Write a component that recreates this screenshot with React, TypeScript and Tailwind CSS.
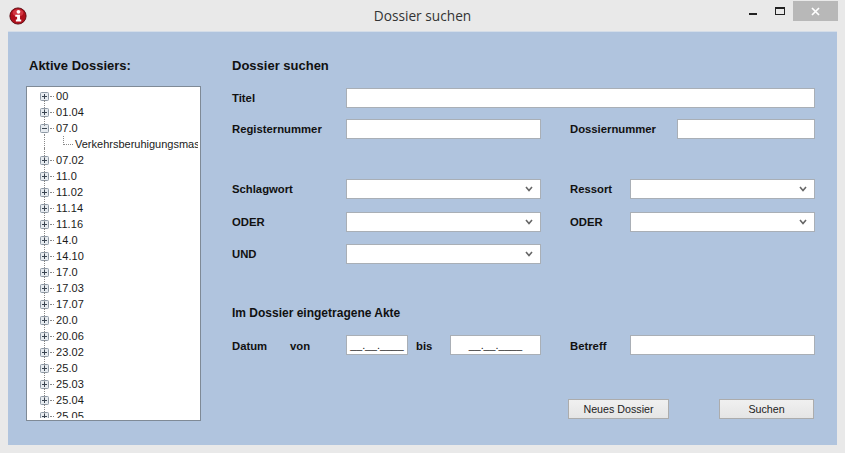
const font = "[font-family:'Liberation_Sans',Arial,sans-serif]";

function Expander({ open }: { open?: boolean }) {
  return (
    <svg width="9" height="9" viewBox="0 0 9 9" className="shrink-0">
      <rect x="0.5" y="0.5" width="8" height="8" rx="1" fill="#e6ebf0" stroke="#8f9aa6" />
      <path d="M2 4.5H7" stroke="#3a4450" />
      {!open && <path d="M4.5 2V7" stroke="#3a4450" />}
    </svg>
  );
}

function TreeRow({ label, open, line = true }: { label: string; open?: boolean; line?: boolean }) {
  return (
    <div className="relative flex h-4 shrink-0 items-center pl-[13px]">
      {line && <span className="absolute left-[17px] top-[-4px] h-[10px] border-l border-dotted border-[#8a8a8a]" />}
      <Expander open={open} />
      <span className="ml-[1px] w-[4px] shrink-0 border-t border-dotted border-[#8a8a8a]" />
      <span className="pl-[2px] text-[11px] leading-4 tracking-[0.1px] text-[#1a1a1a]">{label}</span>
    </div>
  );
}

const nodes = ["07.02", "11.0", "11.02", "11.14", "11.16", "14.0", "14.10", "17.0", "17.03", "17.07", "20.0", "20.06", "23.02", "25.0", "25.03", "25.04", "25.05"];

function Label({ children, w, big }: { children: string; w: string; big?: boolean }) {
  return <div className={`${w} shrink-0 ${big ? "text-[12px]" : "text-[11.3px]"} font-bold leading-4 text-[#111]`}>{children}</div>;
}

function Input({ w, children }: { w: string; children?: string }) {
  return (
    <div className={`${w} flex h-5 shrink-0 items-center justify-center border border-[#a9afb6] bg-white text-[10.7px] leading-none text-[#222]`}>
      {children}
    </div>
  );
}

function Select({ w }: { w: string }) {
  return (
    <div className={`${w} flex h-5 shrink-0 items-center justify-end border border-[#a9afb6] bg-white pr-[7px]`}>
      <svg width="8" height="6" viewBox="0 0 8 6">
        <path d="M1 1L4 4.5L7 1" fill="none" stroke="#666" strokeWidth="1.6" />
      </svg>
    </div>
  );
}

function Btn({ w, children }: { w: string; children: string }) {
  return (
    <div className={`${w} flex h-5 shrink-0 items-center justify-center border border-[#acacac] bg-gradient-to-b from-[#f0f0f0] to-[#e5e5e5] text-[10.7px] text-[#222]`}>
      {children}
    </div>
  );
}

export default function App() {
  return (
    <div className={`flex h-[453px] w-[845px] flex-col overflow-hidden bg-[#e9e9e9] ${font}`}>
      <header className="relative flex h-[31px] shrink-0 items-start justify-center">
        <svg width="18" height="18" viewBox="0 0 20 20" className="absolute left-[9px] top-[7px]">
          <circle cx="10" cy="10" r="9" fill="#b0101c" stroke="#5a0a10" />
          <ellipse cx="10" cy="6.5" rx="6" ry="4" fill="#e8505a" opacity="0.6" />
          <circle cx="10.5" cy="5.3" r="2.1" fill="#fff" />
          <path d="M7 8.5H12.2V14H13.6V16.2H7.6V14H9V10.7H7Z" fill="#fff" />
        </svg>
        <div className="pt-[6px] text-[13.7px] leading-5 text-[#333] [font-family:'Open_Sans',sans-serif]">Dossier suchen</div>
        <div className="absolute right-[7px] top-0 flex h-[21px] items-start">
          <div className="flex h-[21px] w-[30px] items-start justify-center pt-[13px]">
            <span className="h-[2px] w-[8px] bg-[#222]" />
          </div>
          <div className="ml-px flex h-[21px] w-[22px] items-start justify-center pt-[7px]">
            <span className="h-[8px] w-[10px] border border-t-2 border-[#222]" />
          </div>
          <div className="ml-[2px] mt-px flex h-[20px] w-[45px] items-center justify-center bg-[#b8b8b8]">
            <svg width="9" height="9" viewBox="0 0 9 9">
              <path d="M1 1L8 8M8 1L1 8" stroke="#fff" strokeWidth="1.7" />
            </svg>
          </div>
        </div>
      </header>

      <main className="mx-[8px] mb-[8px] flex h-[414px] border-t border-[#d4dde8] bg-[#b0c4de] pl-[18px]">
        <aside className="w-[206px] shrink-0">
          <div className="pt-[26px] pl-[3px] text-[13px] font-bold leading-4 text-[#111]">Aktive Dossiers:</div>
          <div className="mt-[12px] flex h-[335px] w-[175px] flex-col border border-[#7f8a96] bg-white pb-[2px] pr-[2px] pt-[1px]">
            <div className="flex min-h-0 flex-1 flex-col overflow-hidden">
              <TreeRow label="00" line={false} />
              <TreeRow label="01.04" />
              <TreeRow label="07.0" open />
              <div className="relative flex h-4 shrink-0 items-center pl-[36px]">
                <span className="absolute left-[17px] top-[-2px] h-[18px] border-l border-dotted border-[#8a8a8a]" />
                <span className="mb-[8px] h-[9px] w-[10px] shrink-0 border-b border-l border-dotted border-[#8a8a8a]" />
                <span className="whitespace-nowrap pl-[2px] text-[11px] leading-4 text-[#1a1a1a]">Verkehrsberuhigungsmassnahmen</span>
              </div>
              {nodes.map((n) => (
                <TreeRow key={n} label={n} />
              ))}
            </div>
          </div>
        </aside>

        <section className="flex w-[583px] flex-col">
          <div className="pt-[26px] text-[13px] font-bold leading-4 text-[#111]">Dossier suchen</div>
          <div className="mt-[14px] flex items-center">
            <Label w="w-[114px]">Titel</Label>
            <Input w="w-[469px]" />
          </div>
          <div className="mt-[11px] flex items-center">
            <Label w="w-[114px]">Registernummer</Label>
            <Input w="w-[195px]" />
            <div className="w-[29px]" />
            <Label w="w-[107px]">Dossiernummer</Label>
            <Input w="w-[138px]" />
          </div>
          <div className="mt-[40px] flex items-center">
            <Label w="w-[114px]">Schlagwort</Label>
            <Select w="w-[195px]" />
            <div className="w-[29px]" />
            <Label w="w-[60px]">Ressort</Label>
            <Select w="w-[185px]" />
          </div>
          <div className="mt-[13px] flex items-center">
            <Label w="w-[114px]">ODER</Label>
            <Select w="w-[195px]" />
            <div className="w-[29px]" />
            <Label w="w-[60px]">ODER</Label>
            <Select w="w-[185px]" />
          </div>
          <div className="mt-[12px] flex items-center">
            <Label w="w-[114px]">UND</Label>
            <Select w="w-[195px]" />
          </div>
          <div className="mt-[41px]">
            <Label big w="w-[300px]">Im Dossier eingetragene Akte</Label>
          </div>
          <div className="mt-[14px] flex items-start">
            <div className="flex h-5 w-[114px] shrink-0 items-center pt-[2px]">
              <Label w="w-[58px]">Datum</Label>
              <Label w="w-[56px]">von</Label>
            </div>
            <Input w="w-[62px]">__.__.____</Input>
            <div className="w-[8px]" />
            <div className="flex h-5 w-[34px] shrink-0 items-center pt-[2px]">
              <Label w="w-[34px]">bis</Label>
            </div>
            <Input w="w-[91px]">__.__.____</Input>
            <div className="w-[29px]" />
            <div className="flex h-5 w-[60px] shrink-0 items-center pt-[2px]">
              <Label w="w-[60px]">Betreff</Label>
            </div>
            <Input w="w-[185px]" />
          </div>
          <div className="mt-[44px] flex items-center pl-[336px]">
            <Btn w="w-[101px]">Neues Dossier</Btn>
            <div className="w-[50px]" />
            <Btn w="w-[95px]">Suchen</Btn>
          </div>
        </section>
      </main>
    </div>
  );
}
